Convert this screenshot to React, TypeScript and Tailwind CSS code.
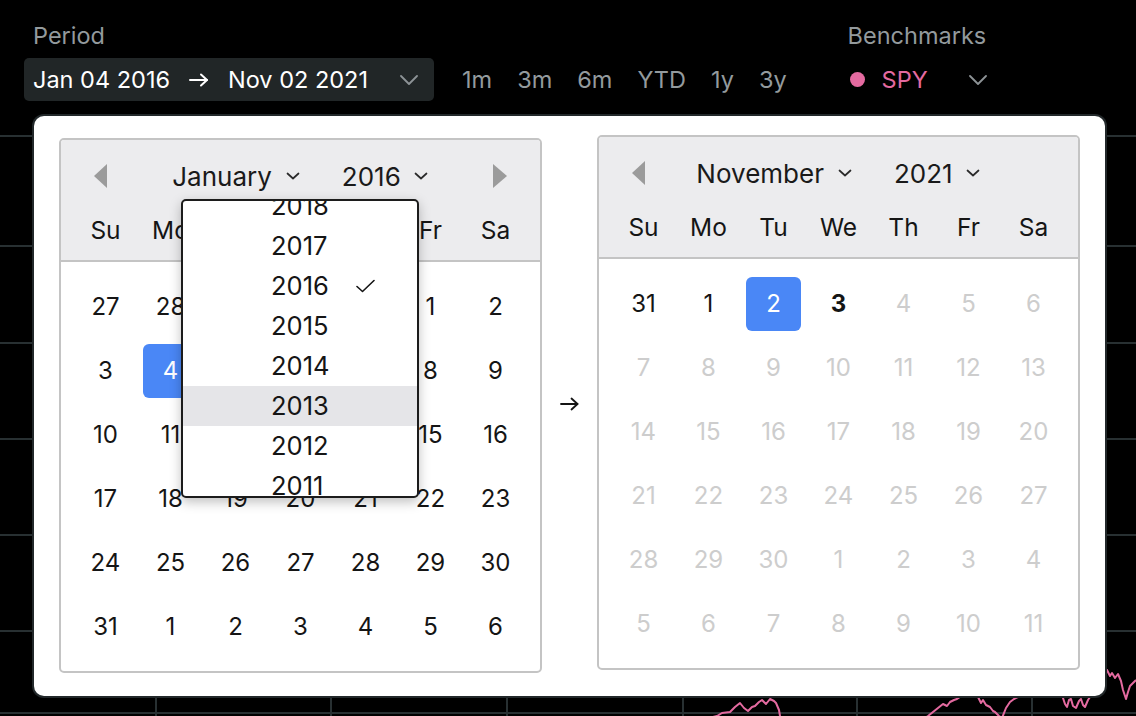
import React from "react";

const FONT = "font-['Inter','Noto_Sans',sans-serif]";

const leftRows: number[][] = [
  [27, 28, 29, 30, 31, 1, 2],
  [3, 4, 5, 6, 7, 8, 9],
  [10, 11, 12, 13, 14, 15, 16],
  [17, 18, 19, 20, 21, 22, 23],
  [24, 25, 26, 27, 28, 29, 30],
  [31, 1, 2, 3, 4, 5, 6],
];

const rightRows: number[][] = [
  [31, 1, 2, 3, 4, 5, 6],
  [7, 8, 9, 10, 11, 12, 13],
  [14, 15, 16, 17, 18, 19, 20],
  [21, 22, 23, 24, 25, 26, 27],
  [28, 29, 30, 1, 2, 3, 4],
  [5, 6, 7, 8, 9, 10, 11],
];

const dayNames = ["Su", "Mo", "Tu", "We", "Th", "Fr", "Sa"];

function SmallChevron() {
  return (
    <svg width="14" height="8" viewBox="0 0 14 8" fill="none">
      <polyline points="1.5,1.5 7,6.5 12.5,1.5" stroke="#2a2a2a" strokeWidth="1.7" strokeLinecap="round" strokeLinejoin="round" />
    </svg>
  );
}

function TopChevron() {
  return (
    <svg width="18" height="10" viewBox="0 0 18 10" fill="none">
      <polyline points="1,1 9,9 17,1" stroke="#8d9396" strokeWidth="1.8" strokeLinecap="round" strokeLinejoin="round" />
    </svg>
  );
}

function TriLeft() {
  return (
    <svg width="13" height="24" viewBox="0 0 13 24">
      <polygon points="13,0 13,24 0,12" fill="#9b9b9b" />
    </svg>
  );
}

function TriRight() {
  return (
    <svg width="14" height="24" viewBox="0 0 14 24">
      <polygon points="0,0 0,24 14,12" fill="#9b9b9b" />
    </svg>
  );
}

type CellKind = "normal" | "selected" | "bold" | "muted";

function Cell({ n, kind }: { n: number; kind: CellKind }) {
  if (kind === "selected") {
    return (
      <div className="w-[65px] h-[64px] flex items-center justify-center">
        <div className="w-[55px] h-[54px] rounded-[6px] bg-[#4a87f6] text-white flex items-center justify-center">{n}</div>
      </div>
    );
  }
  const color = kind === "muted" ? "text-[#cdcdcd]" : "text-[#151515]";
  const weight = kind === "bold" ? "font-bold" : "font-normal";
  return <div className={`w-[65px] h-[64px] flex items-center justify-center ${color} ${weight}`}>{n}</div>;
}

function YearDropdown() {
  const years = [2018, 2017, 2016, 2015, 2014, 2013, 2012, 2011];
  return (
    <div className="absolute left-[120px] top-[59px] w-[238px] h-[299px] bg-white border-2 border-[#1c1c1c] rounded-[5px] overflow-hidden shadow-[0_4px_12px_rgba(0,0,0,0.25)] z-10">
      <div className="-mt-[15px] flex flex-col">
        {years.map((y) => (
          <div key={y} className={`h-[40px] flex items-center pl-[88px] text-[25.5px] text-[#151515] ${y === 2013 ? "bg-[#e5e5e8]" : ""}`}>
            <span className="w-[85px]">{y}</span>
            {y === 2016 && (
              <svg width="19" height="14" viewBox="0 0 19 14" fill="none">
                <polyline points="1,7.5 6.5,12.5 18,1.5" stroke="#151515" strokeWidth="1.6" strokeLinecap="round" strokeLinejoin="round" />
              </svg>
            )}
          </div>
        ))}
      </div>
    </div>
  );
}

function Calendar({
  month,
  year,
  rows,
  kindOf,
  showNext,
  dropdown,
  className,
}: {
  month: string;
  year: string;
  rows: number[][];
  kindOf: (r: number, c: number) => CellKind;
  showNext: boolean;
  dropdown?: boolean;
  className?: string;
}) {
  return (
    <div className={`relative w-[483px] border-2 border-[#c4c4c4] rounded-[5px] bg-white ${className ?? ""}`}>
      <div className="bg-[#ececee] border-b-2 border-[#c4c4c4] rounded-t-[3px]">
        <div className="h-[72px] flex items-center justify-between px-[33px]">
          <TriLeft />
          <div className="flex items-center gap-[42px] text-[26px] text-[#1a1a1a]">
            <div className="flex items-center gap-[14px]">
              <span>{month}</span>
              <SmallChevron />
            </div>
            <div className="flex items-center gap-[13px]">
              <span>{year}</span>
              <SmallChevron />
            </div>
          </div>
          {showNext ? <TriRight /> : <div className="w-[14px]" />}
        </div>
        <div className="h-[36px] px-[12px] flex text-[24.5px] text-[#151515]">
          {dayNames.map((d) => (
            <div key={d} className="w-[65px] flex items-center justify-center">
              {d}
            </div>
          ))}
        </div>
        <div className="h-[12px]" />
      </div>
      <div className="px-[12px] pt-[13px] pb-[12px] text-[24px]">
        {rows.map((row, r) => (
          <div key={r} className="flex">
            {row.map((n, c) => (
              <Cell key={c} n={n} kind={kindOf(r, c)} />
            ))}
          </div>
        ))}
      </div>
      {dropdown && <YearDropdown />}
    </div>
  );
}

function ChartBackground() {
  const hLines = [136, 246, 343, 439, 535, 631, 713];
  const vLines = [156, 331, 507, 683, 857, 1032];
  return (
    <svg width="1136" height="600" viewBox="0 116 1136 600" className="block">
      {hLines.map((y) => (
        <line key={y} x1="0" y1={y} x2="1136" y2={y} stroke="#283032" strokeWidth="2" />
      ))}
      {vLines.map((x) => (
        <line key={x} x1={x} y1="136" x2={x} y2="716" stroke="#283032" strokeWidth="2" />
      ))}
      <polyline
        fill="none"
        stroke="#e46aa0"
        strokeWidth="2"
        strokeLinejoin="round"
        points="700,720 717,716 722,713 730,712 735,707 740,703 744,708 748,711 752,707 755,706 759,702 762,700 766,704 770,699 774,701 776,703 779,710 780,716 782,720"
      />
      <polyline
        fill="none"
        stroke="#e46aa0"
        strokeWidth="2"
        strokeLinejoin="round"
        points="922,720 928,716 933,712 938,708 943,704 947,706 950,702 954,700 957,699 960,697 963,696 970,690 975,692 978,697 981,703 983,700 986,705 990,707 993,711 995,712 999,716 1002,718 1006,708 1010,702 1014,699 1018,697 1030,690 1058,690 1063,698 1065,704 1067,707 1069,700 1071,699 1073,706 1076,708 1079,701 1081,699 1083,705 1085,707 1088,700 1090,697 1100,684 1107,670 1110,676 1112,673 1115,678 1118,674 1121,681 1123,690 1126,699 1128,692 1130,686 1133,683 1136,680"
      />
    </svg>
  );
}

export default function App() {
  const leftKind = (r: number, c: number): CellKind => (r === 1 && c === 1 ? "selected" : "normal");
  const rightKind = (r: number, c: number): CellKind => {
    if (r === 0) {
      if (c === 0 || c === 1) return "normal";
      if (c === 2) return "selected";
      if (c === 3) return "bold";
      return "muted";
    }
    return "muted";
  };

  return (
    <div className={`relative w-[1136px] h-[716px] bg-black overflow-hidden ${FONT}`}>
      {/* Header */}
      <div className="h-[116px] flex items-end pl-[24px] pb-[15px]">
        <div className="flex flex-col gap-[8px]">
          <div className="h-[28px] leading-[28px] pl-[9px] text-[23.5px] text-[#939a9d]">Period</div>
          <div className="w-[410px] h-[43px] rounded-[5px] bg-[#212627] flex items-center pl-[9px] pr-[16px] text-[23.5px] text-white">
            <span>Jan 04 2016</span>
            <svg width="20" height="14" viewBox="0 0 20 14" fill="none" className="ml-[19px] mr-[19px]">
              <line x1="1" y1="7" x2="18" y2="7" stroke="white" strokeWidth="2" strokeLinecap="round" />
              <polyline points="12,1.5 18,7 12,12.5" stroke="white" strokeWidth="2" strokeLinecap="round" strokeLinejoin="round" />
            </svg>
            <span>Nov 02 2021</span>
            <div className="ml-auto">
              <TopChevron />
            </div>
          </div>
        </div>
        <div className="h-[43px] ml-[28px] flex items-center gap-[25px] text-[23.5px] text-[#939a9d]">
          <span>1m</span>
          <span>3m</span>
          <span>6m</span>
          <span>YTD</span>
          <span>1y</span>
          <span>3y</span>
        </div>
        <div className="ml-[61px] flex flex-col gap-[8px]">
          <div className="h-[28px] leading-[28px] text-[23.5px] text-[#939a9d]">Benchmarks</div>
          <div className="h-[43px] flex items-center text-[23.5px]">
            <div className="ml-[2px] w-[15px] h-[15px] rounded-full bg-[#e46aa0]" />
            <span className="ml-[17px] text-[#e46aa0]">SPY</span>
            <div className="ml-[41px]">
              <TopChevron />
            </div>
          </div>
        </div>
      </div>

      {/* Chart background */}
      <ChartBackground />

      {/* Date range popup */}
      <div className="absolute left-[34px] top-[116px] w-[1071px] h-[580px] bg-white rounded-[10px] ring-2 ring-[#22282a] flex items-start pt-[19px] px-[25px]">
        <Calendar
          className="mt-[3px]"
          month="January"
          year="2016"
          rows={leftRows}
          kindOf={leftKind}
          showNext={true}
          dropdown={true}
        />
        <div className="w-[55px] h-[538px] flex items-center justify-center">
          <svg width="19" height="14" viewBox="0 0 19 14" fill="none">
            <line x1="1" y1="7" x2="17.5" y2="7" stroke="#151515" strokeWidth="1.8" strokeLinecap="round" />
            <polyline points="11.5,1.5 17.5,7 11.5,12.5" stroke="#151515" strokeWidth="1.8" strokeLinecap="round" strokeLinejoin="round" />
          </svg>
        </div>
        <Calendar
          month="November"
          year="2021"
          rows={rightRows}
          kindOf={rightKind}
          showNext={false}
        />
      </div>
    </div>
  );
}
